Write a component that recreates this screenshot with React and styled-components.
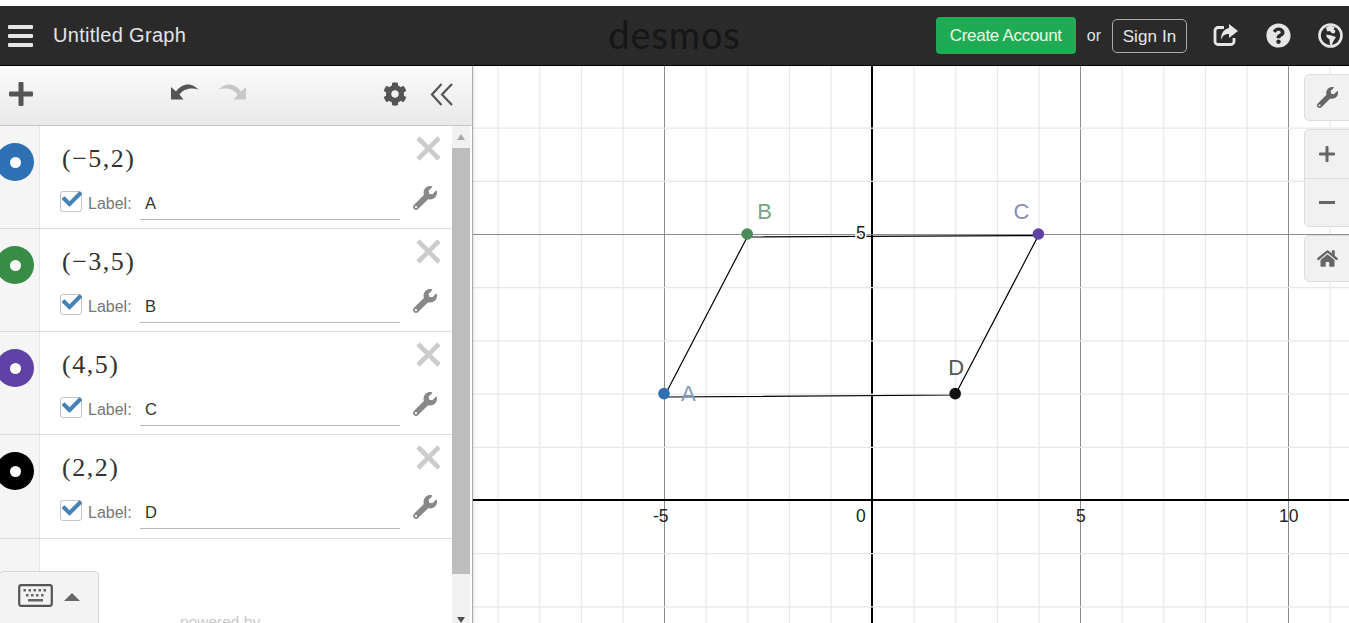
import React from 'react';
import styled, { createGlobalStyle } from 'styled-components';
import { FaWrench, FaCog, FaHome, FaQuestionCircle, FaCheck } from 'react-icons/fa';

const GlobalStyle = createGlobalStyle`
  html, body { margin: 0; padding: 0; background: #fff; overflow: hidden; }
  * { box-sizing: border-box; }
`;

const Page = styled.div`
  width: 1349px;
  height: 623px;
  padding-top: 6px;
  overflow: hidden;
  display: flex;
  flex-direction: column;
  font-family: "Liberation Sans", Arial, sans-serif;
  background: #fff;
`;

const Header = styled.header`
  height: 60px;
  flex: none;
  display: grid;
  grid-template-columns: 1fr auto 1fr;
  align-items: center;
  background: #2a2a2a;
  border-bottom: 1px solid #000;
  color: #eee;
`;

const HeaderLeft = styled.div`
  display: flex;
  align-items: center;
  padding-left: 8px;
  gap: 20px;
`;

const Burger = styled.div`
  width: 25px;
  display: flex;
  flex-direction: column;
  gap: 5px;
  span { height: 4px; background: #e6e6e6; border-radius: 1px; }
`;

const GraphTitle = styled.div`
  font-size: 20px;
  letter-spacing: 0.3px;
  color: #e4e4e4;
`;

const Logo = styled.div`
  font-family: "Lato", sans-serif;
  font-weight: 400;
  font-size: 38px;
  line-height: 1;
  letter-spacing: 0.9px;
  color: #161616;
  margin-top: -4px;
`;

const HeaderRight = styled.div`
  display: flex;
  align-items: center;
  justify-content: flex-end;
  padding-right: 6px;
`;

const CreateButton = styled.div`
  width: 140px;
  height: 37px;
  margin-top: -1px;
  padding-top: 1px;
  border-radius: 4px;
  background: #1fab54;
  color: #eafbe9;
  font-size: 17px;
  letter-spacing: -0.3px;
  display: flex;
  align-items: center;
  justify-content: center;
`;

const OrText = styled.span`
  font-size: 16px;
  margin: 0 11px 0 11px;
  color: #e2e2e2;
`;

const SignIn = styled.div`
  width: 75px;
  height: 34px;
  padding-top: 2px;
  border: 1px solid #aaa;
  border-radius: 5px;
  font-size: 17px;
  letter-spacing: 0.1px;
  color: #e6e6e6;
  display: flex;
  align-items: center;
  justify-content: center;
`;

const HeaderIcons = styled.div`
  display: flex;
  align-items: center;
  gap: 27px;
  margin-left: 26px;
  color: #e6e6e6;
  svg { display: block; }
`;

const Body = styled.div`
  flex: 1;
  min-height: 0;
  display: flex;
`;

const Sidebar = styled.aside`
  width: 473px;
  flex: none;
  display: flex;
  flex-direction: column;
  border-right: 1px solid #aaa;
  position: relative;
  background: #fff;
  z-index: 1;
  box-shadow: 1px 0 3px rgba(0, 0, 0, 0.12);
`;

const Toolbar = styled.div`
  height: 60px;
  flex: none;
  padding-bottom: 3px;
  display: grid;
  grid-template-columns: 170px 1fr 100px;
  align-items: center;
  background: linear-gradient(#fbfbfb, #e9e9e9);
  border-bottom: 1px solid #c6c6c6;
  color: #555;
`;

const ToolGroup = styled.div`
  display: flex;
  align-items: center;
  justify-content: ${p => p.$end ? 'flex-end' : 'flex-start'};
  gap: ${p => p.$gap || 0}px;
  padding-left: ${p => p.$left || 0}px;
  padding-right: ${p => p.$right || 0}px;
  svg { display: block; }
`;

const ListArea = styled.div`
  flex: 1;
  min-height: 0;
  display: flex;
  position: relative;
`;

const ExprList = styled.div`
  flex: 1;
  display: flex;
  flex-direction: column;
  background: linear-gradient(to right, #f5f5f5 39px, #e6e6e6 39px, #e6e6e6 40px, #fff 40px);
`;

const Row = styled.div`
  height: 103px;
  flex: none;
  display: grid;
  grid-template-columns: 40px 1fr 52px;
  border-bottom: 1px solid #dcdcdc;
  background: linear-gradient(to right, #f5f5f5 39px, #e6e6e6 39px, #e6e6e6 40px, #fff 40px);
  &:last-child { height: 104px; }
`;

const Gutter = styled.div`
  position: relative;
  overflow: hidden;
`;

const Swatch = styled.div`
  position: absolute;
  left: -4px;
  top: 17px;
  width: 38px;
  height: 38px;
  border-radius: 50%;
  background: ${p => p.$color};
  display: flex;
  align-items: center;
  justify-content: center;
  &::after {
    content: '';
    width: 11px;
    height: 11px;
    border-radius: 50%;
    background: #fff;
  }
`;

const RowMain = styled.div`
  display: flex;
  flex-direction: column;
  padding: 17px 0 0 20px;
`;

const MathText = styled.div`
  height: 34px;
  margin-left: 2px;
  font-family: "Liberation Serif", "Times New Roman", serif;
  font-size: 26px;
  line-height: 32px;
  letter-spacing: 1.5px;
  color: #333;
`;

const LabelLine = styled.div`
  margin-top: 10px;
  height: 28px;
  display: flex;
  align-items: flex-end;
`;

const CheckBox = styled.div`
  position: relative;
  width: 22px;
  height: 21px;
  border: 1px solid #c4c4c4;
  border-radius: 3px;
  background: #fff;
  margin-bottom: 3px;
  color: #4682b4;
  svg { position: absolute; left: 1px; top: -3px; }
`;

const LabelCaption = styled.span`
  font-size: 16px;
  color: #777;
  margin-left: 6px;
  width: 52px;
  line-height: 23px;
`;

const LabelInput = styled.div`
  width: 260px;
  height: 28px;
  margin-bottom: -5px;
  padding: 1px 0 0 5px;
  border-bottom: 1px solid #b8b8b8;
  font-size: 16.5px;
  line-height: 20px;
  color: #333;
`;

const RowTools = styled.div`
  display: flex;
  flex-direction: column;
  padding-top: 10px;
  svg { display: block; }
`;

const RemoveIcon = styled.div`
  height: 50px;
  padding-left: 16px;
`;

const WrenchIcon = styled.div`
  padding-left: 13px;
  color: #888;
`;

const Scrollbar = styled.div`
  width: 18px;
  flex: none;
  margin-right: 2px;
  background: #f1f1f1;
  display: flex;
  flex-direction: column;
  align-items: center;
`;

const ScrollArrow = styled.div`
  height: ${p => p.$down ? 7 : 22}px;
  flex: none;
  display: flex;
  align-items: center;
  justify-content: center;
  &::before {
    content: '';
    border-left: 4px solid transparent;
    border-right: 4px solid transparent;
    ${p => p.$down ? 'border-top: 6px solid #505050;' : 'border-bottom: 6px solid #a8a8a8;'}
  }
`;

const ScrollThumb = styled.div`
  width: 100%;
  height: 426px;
  background: #bdbdbd;
  flex: none;
`;

const ScrollGap = styled.div`
  flex: 1;
`;

const KeyboardTab = styled.div`
  position: absolute;
  left: -1px;
  bottom: -6px;
  width: 100px;
  height: 58px;
  padding: 12px 0 0 18px;
  display: flex;
  align-items: flex-start;
  gap: 11px;
  background: #f3f3f3;
  border: 1px solid #d8d8d8;
  border-radius: 4px;
  svg { display: block; }
`;

const KeyboardUp = styled.span`
  width: 0;
  height: 0;
  margin-top: 9px;
  border-left: 8px solid transparent;
  border-right: 8px solid transparent;
  border-bottom: 8px solid #666;
`;

const PoweredBy = styled.div`
  position: absolute;
  left: 180px;
  bottom: -8px;
  font-size: 15.5px;
  color: #c8c8c8;
`;

const GraphArea = styled.main`
  flex: 1;
  min-width: 0;
  position: relative;
  overflow: hidden;
  background: #fff;
`;

const GraphSvg = styled.svg`
  display: block;
  width: 100%;
  height: 100%;
`;

const Controls = styled.div`
  position: absolute;
  right: -6px;
  top: 8px;
  width: 51px;
  display: flex;
  flex-direction: column;
  gap: 8px;
`;

const ControlGroup = styled.div`
  border: 1px solid #dedede;
  border-radius: 5px;
  background: #f1f1f1;
  color: #666;
  overflow: hidden;
`;

const ControlCell = styled.div`
  height: ${p => p.$height || 45}px;
  display: flex;
  align-items: center;
  padding-left: ${p => p.$left || 12}px;
  & + & { border-top: 1px solid #dedede; }
  svg { display: block; }
`;

const UndoIcon = ({ flip, color }) => (
  <svg width="30" height="22" viewBox="0 0 30 22" style={flip ? { transform: 'scaleX(-1)' } : undefined}>
    <path d="M1 4V16.500H13.500L9.500 11.500C13 6.500 20 4 28.500 6.500C22 0 13 -1 6 8.500z" fill={color} />
  </svg>
);

const PlusIcon = ({ size, bar, color }) => (
  <svg width={size} height={size} viewBox={`0 0 ${size} ${size}`}>
    <rect x={(size - bar) / 2} y="0" width={bar} height={size} rx="1" fill={color} />
    <rect x="0" y={(size - bar) / 2} width={size} height={bar} rx="1" fill={color} />
  </svg>
);

const CrossIcon = () => (
  <svg width="25" height="25" viewBox="0 0 25 25" stroke="#ccc" strokeWidth="4.600">
    <path d="M2 2 23 23" />
    <path d="M23 2 2 23" />
  </svg>
);

const ChevronsIcon = () => (
  <svg width="24" height="24" viewBox="0 0 24 24" fill="none" stroke="#555" strokeWidth="2.200">
    <path d="M11.500 2 2 12.500 11.500 23" />
    <path d="M22 2 12 12.500 22 23" />
  </svg>
);

const ShareIcon = () => (
  <svg width="26" height="24" viewBox="0 0 26 24">
    <path d="M11 3.500H5a3 3 0 0 0-3 3v11a3 3 0 0 0 3 3h13a3 3 0 0 0 3-3v-3.500" fill="none" stroke="#e6e6e6" strokeWidth="2.800" />
    <path d="M16 0l9 7-9 7v-4c-4 0-6.500 1.500-8 6 0-8 3.500-11 8-12z" fill="#e6e6e6" />
  </svg>
);

const GlobeIcon = () => (
  <svg width="25" height="25" viewBox="0 0 25 25">
    <circle cx="12.500" cy="12.500" r="11" fill="none" stroke="#e6e6e6" strokeWidth="2.600" />
    <path d="M8 4.500l4-2 5 1.500-1.500 2.500 2 1-1 3-3-.5-1.500-2-2.500.5-1-2z" fill="#e6e6e6" />
    <path d="M8.500 11.500l5 1 4.500 1.500-2.500 4-2 4.500-1.500-.5-.5-5.500-3-2.500z" fill="#e6e6e6" />
  </svg>
);

const KeyboardIcon = () => (
  <svg width="35" height="23" viewBox="0 0 35 23">
    <rect x="1.200" y="1.200" width="32.600" height="20.600" rx="2" fill="none" stroke="#555" strokeWidth="2.200" />
    <g fill="#666">
      {[5, 10, 15, 20, 25].map(x => <rect key={x} x={x + 0.5} y="5" width="2.500" height="2.500" />)}
      {[7.500, 12.500, 17.500, 22.500].map(x => <rect key={x} x={x + 0.5} y="10" width="2.500" height="2.500" />)}
      <rect x="10" y="15" width="15" height="2.500" />
    </g>
  </svg>
);

const points = [
  { x: -5, y: 2, label: 'A', color: '#2d70b3', text: '#7e9db8', dx: 17, dy: 7 },
  { x: -3, y: 5, label: 'B', color: '#4b8a59', text: '#7aa583', dx: 10, dy: -15 },
  { x: 4, y: 5, label: 'C', color: '#6042a6', text: '#8d8bb0', dx: -25, dy: -15 },
  { x: 2, y: 2, label: 'D', color: '#111', text: '#555', dx: -7, dy: -19 },
];

const expressions = [
  { math: '(−5,2)', label: 'A', color: '#2d70b3' },
  { math: '(−3,5)', label: 'B', color: '#388c46' },
  { math: '(4,5)', label: 'C', color: '#6042a6' },
  { math: '(2,2)', label: 'D', color: '#000000' },
];

// graph coordinates, relative to the graph panel
const originX = 399;
const originY = 434;
const unitX = 41.6;
const unitY = 53.2;
const toX = v => originX + v * unitX;
const toY = v => originY - v * unitY;
const range = (a, b) => Array.from({ length: b - a + 1 }, (_, i) => a + i);
const gridStroke = v => v === 0 ? '#000' : v % 5 === 0 ? '#8c8c8c' : '#e8e8e8';
const gridWidth = v => v === 0 ? 2 : v % 5 === 0 ? 1 : 1.2;
// 1px lines sit on the pixel centre, the 2px axes on the pixel edge
const gridNudge = v => v === 0 ? 0 : 0.5;

const Graph = () => {
  const xs = range(-9, 11);
  const ys = range(-3, 7);
  const shape = [[-5, 397 - 66], [-3, 237 - 66], [4, 235.5 - 66], [2, 395 - 66]]
    .map(([x, y]) => `${toX(x)},${y}`).join(' ');
  return (
    <GraphSvg viewBox="0 0 876 557">
      {xs.map(v => (
        <line key={v} x1={toX(v) + gridNudge(v)} x2={toX(v) + gridNudge(v)} y1="0" y2="557" stroke={gridStroke(v)} strokeWidth={gridWidth(v)} />
      ))}
      {ys.map(v => (
        <line key={v} x1="0" x2="876" y1={toY(v) + gridNudge(v)} y2={toY(v) + gridNudge(v)} stroke={gridStroke(v)} strokeWidth={gridWidth(v)} />
      ))}
      <polygon points={shape} fill="none" stroke="#000" strokeWidth="1.200" />
      {points.map(p => (
        <g key={p.label}>
          <circle cx={toX(p.x)} cy={toY(p.y)} r="5.800" fill={p.color} />
          <text x={toX(p.x) + p.dx} y={toY(p.y) + p.dy} fontSize="22" fill={p.text} fontFamily="Liberation Sans">{p.label}</text>
        </g>
      ))}
      <g fontFamily="Liberation Sans" fontSize="17.5" fill="#222">
        <text x={toX(-5) - 11} y="456">-5</text>
        <text x={toX(0) - 16} y="456">0</text>
        <text x={toX(5) - 4} y="456">5</text>
        <text x={toX(10) - 9} y="456">10</text>
        <text x={toX(0) - 16} y={toY(5) + 5} stroke="#fff" strokeWidth="3" paintOrder="stroke">5</text>
      </g>
    </GraphSvg>
  );
};

const App = () => (
  <Page>
    <GlobalStyle />
    <Header>
      <HeaderLeft>
        <Burger><span /><span /><span /></Burger>
        <GraphTitle>Untitled Graph</GraphTitle>
      </HeaderLeft>
      <Logo>desmos</Logo>
      <HeaderRight>
        <CreateButton>Create Account</CreateButton>
        <OrText>or</OrText>
        <SignIn>Sign In</SignIn>
        <HeaderIcons>
          <ShareIcon />
          <FaQuestionCircle size={25} />
          <GlobeIcon />
        </HeaderIcons>
      </HeaderRight>
    </Header>
    <Body>
      <Sidebar>
        <Toolbar>
          <ToolGroup $left={9}><PlusIcon size={24} bar={5} color="#555" /></ToolGroup>
          <ToolGroup $gap={17}>
            <UndoIcon color="#555" />
            <UndoIcon flip color="#c8c8c8" />
          </ToolGroup>
          <ToolGroup $end $gap={23} $right={18}>
            <FaCog size={24} />
            <ChevronsIcon />
          </ToolGroup>
        </Toolbar>
        <ListArea>
          <ExprList>
            {expressions.map(e => (
              <Row key={e.label}>
                <Gutter><Swatch $color={e.color} /></Gutter>
                <RowMain>
                  <MathText>{e.math}</MathText>
                  <LabelLine>
                    <CheckBox><FaCheck size={20} /></CheckBox>
                    <LabelCaption>Label:</LabelCaption>
                    <LabelInput>{e.label}</LabelInput>
                  </LabelLine>
                </RowMain>
                <RowTools>
                  <RemoveIcon><CrossIcon /></RemoveIcon>
                  <WrenchIcon><FaWrench size={24} /></WrenchIcon>
                </RowTools>
              </Row>
            ))}
          </ExprList>
          <Scrollbar>
            <ScrollArrow />
            <ScrollThumb />
            <ScrollGap />
            <ScrollArrow $down />
          </Scrollbar>
          <PoweredBy>powered by</PoweredBy>
          <KeyboardTab>
            <KeyboardIcon />
            <KeyboardUp />
          </KeyboardTab>
        </ListArea>
      </Sidebar>
      <GraphArea>
        <Graph />
        <Controls>
          <ControlGroup>
            <ControlCell><FaWrench size={21} /></ControlCell>
          </ControlGroup>
          <ControlGroup>
            <ControlCell $height={48} $left={14}><PlusIcon size={16} bar={3} color="#666" /></ControlCell>
            <ControlCell $height={48} $left={14}><svg width="16" height="4"><rect width="16" height="3" fill="#666" /></svg></ControlCell>
          </ControlGroup>
          <ControlGroup>
            <ControlCell><FaHome size={21} /></ControlCell>
          </ControlGroup>
        </Controls>
      </GraphArea>
    </Body>
  </Page>
);

export default App;
